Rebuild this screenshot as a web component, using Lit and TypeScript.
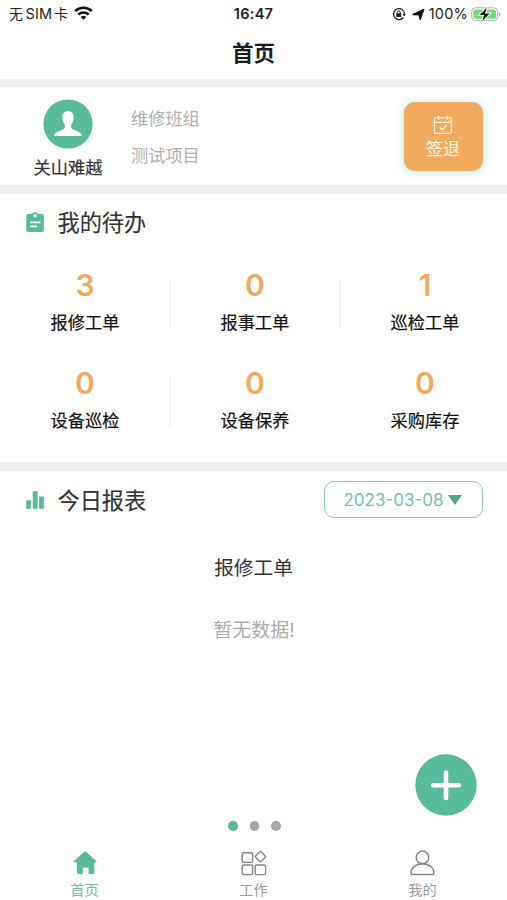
import { LitElement, html, css } from "lit";
import { customElement, state } from "lit/decorators.js";
import { classMap } from "lit/directives/class-map.js";

const todos = [
  { count: 3, label: "报修工单", line: true },
  { count: 0, label: "报事工单", line: true },
  { count: 1, label: "巡检工单", line: false },
  { count: 0, label: "设备巡检", line: true },
  { count: 0, label: "设备保养", line: false },
  { count: 0, label: "采购库存", line: false },
];

@customElement("status-bar")
class StatusBar extends LitElement {
  static styles = css`
    :host { display: flex; height: 28px; position: relative; align-items: center; justify-content: space-between; padding: 0 6px 0 9px; color: #222; font-size: 14.5px; box-sizing: border-box; }
    .side { display: flex; align-items: center; height: 28px; line-height: 28px; }
    .cjk { font-size: 14px; }
    .sim { letter-spacing: .1px; margin: 0 2px 0 2.5px; }
    .time { position: absolute; left: 0; right: 0; text-align: center; line-height: 28px; font-weight: 600; font-size: 14.5px; letter-spacing: .3px; }
    .wifi { margin: -2px 0 0 6px; }
    .lock { margin-right: 6px; }
    .arrow { margin-right: 4px; }
    .pct { letter-spacing: .2px; margin-right: 3px; }
  `;
  render() {
    return html`
      <div class="side">
        <span class="cjk">无</span><span class="sim">SIM</span><span class="cjk">卡</span>
        <svg class="wifi" width="19" height="14" viewBox="0 0 19 14" fill="none" stroke="#111" stroke-width="2.5">
          <path d="M1.2 5.2a11.9 11.9 0 0 1 16.600 0M4.3 8.600a7.400 7.400 0 0 1 10.400 0" />
          <path d="M6.700 11a4 4 0 0 1 5.600 0L9.500 13.800z" fill="#111" stroke="none" />
        </svg>
      </div>
      <div class="time">16:47</div>
      <div class="side">
        <svg class="lock" width="14" height="14" viewBox="0 0 14 14" fill="none" stroke="#222" stroke-width="1.3">
          <path d="M11.800 4.300A5.500 5.500 0 1 0 11.400 10.500" /><path d="M12.200 4.800v3.600" />
          <path d="M10.600 7.100h3.200l-1.600 2.200z" fill="#222" stroke="none" />
          <rect x="4.200" y="6.300" width="5" height="3.800" rx=".6" fill="#222" stroke="none" />
          <path d="M5.300 6.600V5.300a1.400 1.400 0 0 1 2.800 0v1.300" stroke-width="1" />
        </svg>
        <svg class="arrow" width="13" height="13" viewBox="0 0 13 13"><path d="M11.800 1.400 8.200 11.600 7.200 6.800 1 6.500z" fill="#111" stroke="#111" stroke-width="1.300" stroke-linejoin="round" /></svg>
        <span class="pct">100%</span>
        <svg width="30" height="15" viewBox="0 0 30 15">
          <rect x=".7" y=".8" width="26" height="12.800" rx="3.800" fill="#fff" stroke="#aeb2ae" stroke-width="1" />
          <rect x="2.400" y="2.600" width="22.600" height="9.200" rx="2.300" fill="#75d77b" />
          <path d="M28 5.200q1.600.6 1.600 2.100t-1.600 2.100z" fill="#aeb2ae" />
          <path d="M15.800.8 8.600 8.100h4.500L11.200 13.900l7.500-7.400h-4.600z" fill="#111" stroke="#fff" stroke-width="2" paint-order="stroke" />
        </svg>
      </div>`;
  }
}

@customElement("app-root")
class AppRoot extends LitElement {
  @state() private tab = 0;
  @state() private page = 0;

  static styles = css`
    :host { display: flex; flex-direction: column; position: relative; width: 507px; height: 900px; overflow: hidden; background: #fff; font-family: Inter, "Noto Sans CJK SC", sans-serif; color: #333; }
    svg { display: block; flex: none; }
    .title { height: 51px; box-sizing: border-box; padding-top: 1px; line-height: 49px; text-align: center; font-size: 21.5px; font-weight: 700; color: #1c1c1c; }
    .gap { height: 8px; background: #efeff3; flex: none; }
    .gap.wide { height: 9px; }
    .profile { display: flex; height: 98px; box-sizing: border-box; padding: 0 24px 0 33px; }
    .user { width: 70px; display: flex; flex-direction: column; align-items: center; padding-top: 12px; }
    .name { font-size: 17.2px; line-height: 24px; margin-top: 7px; white-space: nowrap; -webkit-text-stroke: .2px #333; }
    .info { flex: 1; padding: 14px 0 0 28px; display: flex; flex-direction: column; gap: 1px; font-size: 17.2px; line-height: 36px; color: #b0b0b0; }
    .sign { width: 79px; height: 69px; margin-top: 15px; border-radius: 11px; background: #f0ab5f; box-shadow: 0 1px 9px 1px rgba(116, 222, 193, .5); color: #fff3e5; display: flex; flex-direction: column; align-items: center; box-sizing: border-box; padding: 13px 1px 0 0; }
    .sign span { font-size: 17.2px; line-height: 24px; margin-top: 2px; }
    .todo { height: 268px; overflow: hidden; }
    .head { display: flex; align-items: center; height: 56px; padding: 0 24.500px 0 25px; }
    .head h2 { margin: 2px 0 0 12.500px; font-size: 22.2px; line-height: 32px; font-weight: 400; -webkit-text-stroke: .15px #333; flex: 1; }
    .grid { display: grid; grid-template-columns: repeat(3, 170px); grid-auto-rows: 98px; padding-top: 17px; }
    .cell { display: flex; flex-direction: column; align-items: center; position: relative; }
    .num { font-size: 30px; font-weight: 600; line-height: 38px; margin-top: -1px; color: #f0ab5f; }
    .label { font-size: 17.2px; line-height: 24px; margin-top: 7px; color: #111; -webkit-text-stroke: .2px #111; }
    .cell.line::after { content: ""; position: absolute; right: -1px; top: 13px; height: 49px; width: 2px; background: #f4f4f4; }
    .report { flex: 1; display: flex; flex-direction: column; align-items: center; }
    .report .head { align-self: stretch; height: 57px; }
    .date { width: 159px; height: 37px; box-sizing: border-box; border: 1.5px solid #85ccb3; border-radius: 10px; display: flex; align-items: center; justify-content: center; gap: 4px; font-size: 17px; color: #72c4a8; padding-right: 1px; }
    .kind { font-size: 19.7px; line-height: 28px; margin-top: 26px; }
    .empty { font-size: 19px; line-height: 28px; margin-top: 35px; padding-left: 1px; color: #acacac; }
    .dots { display: flex; gap: 12px; justify-content: center; height: 10px; margin: 0 0 17px; padding-left: 2px; }
    .dot { width: 9.6px; height: 9.6px; border-radius: 50%; background: #a7a7a7; }
    .dot.on { background: #58bc9c; }
    .tabs { display: grid; grid-template-columns: repeat(3, 1fr); height: 52px; }
    .tab { display: flex; flex-direction: column; align-items: center; font-size: 14.2px; line-height: 20px; color: #9a9a9a; }
    .tab svg { margin-bottom: 2px; }
    .tab.on { color: #67c1a4; }
    .fab { position: absolute; left: 415px; top: 754px; }
  `;

  private icons = [
    html`<svg width="28" height="30" viewBox="0 0 28 30"><path d="M15.200 3.900 25.300 13c.6.6.2 1.300-.5 1.300h-1.500v10q0 1.700-1.700 1.700h-4v-6.600h-5.800v6.600H7.600q-1.700 0-1.700-1.700v-10H3.300c-.8 0-1.100-.8-.5-1.300l10.200-9.100q1.100-.9 2.200 0z" fill="#58bc9c" /></svg>`,
    html`<svg width="28" height="30" viewBox="0 0 28 30" fill="none" stroke="#858585" stroke-width="1.4"><rect x="2.200" y="4.800" width="10.400" height="9.600" rx="1.500" /><rect x="2.200" y="17" width="10.400" height="9.600" rx="1.500" /><rect x="15.200" y="17" width="10.400" height="9.600" rx="1.500" /><rect x="16.500" y="4.700" width="7.800" height="7.800" rx="1" transform="rotate(45 20.400 8.600)" /></svg>`,
    html`<svg width="28" height="30" viewBox="0 0 28 30" fill="none" stroke="#858585" stroke-width="1.5"><circle cx="13.500" cy="9.400" r="6.300" /><path d="M13.500 15.700C6.500 15.700 2 20 2 25.300q0 1.300 1.200 1.300h20.600q1.200 0 1.200-1.300C25 20 20.500 15.700 13.500 15.700z" /></svg>`,
  ];

  render() {
    return html`
      <status-bar></status-bar>
      <div class="title">首页</div>
      <div class="gap"></div>
      <section class="profile">
        <div class="user">
          <svg width="50" height="50" viewBox="0 0 50 50"><circle cx="25" cy="25" r="24.600" fill="#58bc9c" /><path d="M25 12.200c-4 0-5.900 2.500-5.600 6.600.2 3 1 5 2.300 6.700.5 2.500 0 4.300-2.200 5.300-3.500 1.500-6.300 2-8.200 4.600q-.9 1.600.5 1.600h26.400q1.400 0 .5-1.600c-1.900-2.600-4.700-3.100-8.200-4.600-2.200-1-2.700-2.800-2.200-5.300 1.300-1.700 2.100-3.700 2.300-6.700.3-4.100-1.600-6.600-5.600-6.600z" fill="#fff" /></svg>
          <div class="name">关山难越</div>
        </div>
        <div class="info"><span>维修班组</span><span>测试项目</span></div>
        <div class="sign">
          <svg width="20" height="20" viewBox="0 0 20 20" fill="none" stroke="#fff0df" stroke-width="1.300"><rect x="1.500" y="2.600" width="17" height="15.800" rx="1.500" /><path d="M1.500 7.400h17M5.800.8v4M14.200.8v4M6.800 12.300l2.500 2.500 4.300-4.500" /></svg>
          <span>签退</span>
        </div>
      </section>
      <div class="gap wide"></div>
      <section class="todo">
        <div class="head">
          <svg width="20" height="20" viewBox="0 0 20 20"><rect x="1.300" y="2" width="17.600" height="18" rx="2" fill="#58bc9c" /><circle cx="10.100" cy="3" r="3" fill="#58bc9c" /><circle cx="10.100" cy="3.800" r="1.700" fill="#fff" /><path d="M5 10.300h10.400M5 14.400h7" stroke="#fff" stroke-width="1.700" /></svg>
          <h2>我的待办</h2>
        </div>
        <div class="grid">
          ${todos.map((t) => html`<div class=${classMap({ cell: true, line: t.line })}><span class="num">${t.count}</span><span class="label">${t.label}</span></div>`)}
        </div>
      </section>
      <div class="gap wide"></div>
      <section class="report">
        <div class="head">
          <svg width="20" height="20" viewBox="0 0 20 20"><path d="M1.200 10.300h5v8.500h-5zM7.700 1.200h5v17.600h-5zM14.100 6.500h4.800v12.300h-4.800z" fill="#58bc9c" /></svg>
          <h2>今日报表</h2>
          <div class="date"><span>2023-03-08</span><svg width="14" height="10" viewBox="0 0 14 10"><path d="M0 0h14L7 10z" fill="#50aa8d" /></svg></div>
        </div>
        <div class="kind">报修工单</div>
        <div class="empty">暂无数据!</div>
      </section>
      <div class="dots">${[0, 1, 2].map((i) => html`<span class=${classMap({ dot: true, on: i === this.page })}></span>`)}</div>
      <nav class="tabs">
        ${["首页", "工作", "我的"].map((name, i) => html`<div class=${classMap({ tab: true, on: i === this.tab })} @click=${() => (this.tab = i)}>${this.icons[i]}<span>${name}</span></div>`)}
      </nav>
      <svg class="fab" width="62" height="62" viewBox="0 0 62 62"><circle cx="31" cy="31" r="30.700" fill="#58bc9c" /><path d="M31 18.500v25.500M18.200 31.200h25.600" stroke="#fff" stroke-width="4.600" stroke-linecap="round" /></svg>
    `;
  }
}
